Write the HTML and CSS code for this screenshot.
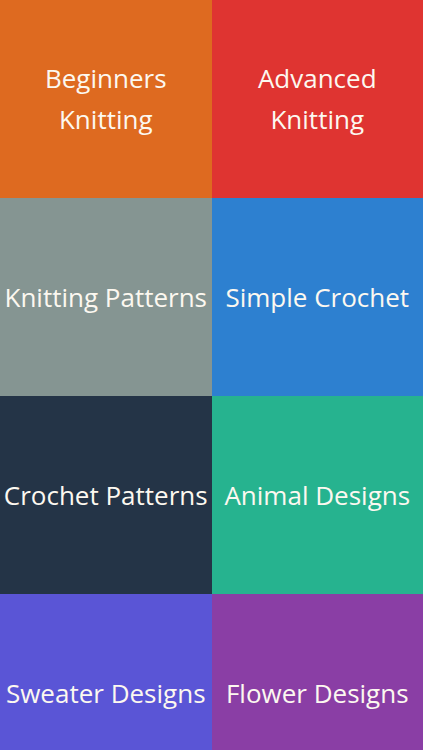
FILE: index.html
```html
<!DOCTYPE html>
<html>
<head>
<meta charset="utf-8">
<link rel="stylesheet" href="styles.css">
</head>
<body>
<div class="grid">
  <div class="tile c1"><span>Beginners<br>Knitting</span></div>
  <div class="tile c2"><span>Advanced<br>Knitting</span></div>
  <div class="tile c3"><span>Knitting Patterns</span></div>
  <div class="tile c4"><span>Simple Crochet</span></div>
  <div class="tile c5"><span>Crochet Patterns</span></div>
  <div class="tile c6"><span>Animal Designs</span></div>
  <div class="tile c7"><span>Sweater Designs</span></div>
  <div class="tile c8"><span>Flower Designs</span></div>
</div>
</body>
</html>
```
FILE: styles.css
```css
html, body {
  margin: 0;
  padding: 0;
  overflow: hidden;
  height: 750px;
}
.grid {
  display: grid;
  grid-template-columns: 211.5px 211.5px;
  grid-auto-rows: 198px;
}
.tile {
  display: flex;
  align-items: center;
  justify-content: center;
  text-align: center;
  color: #fcf8f0;
  font-family: "Open Sans", sans-serif;
  font-size: 26px;
  line-height: 41px;
  white-space: nowrap;
  letter-spacing: 0;
}
.c1 { background: #de6a20; }
.c2 { background: #df3431; }
.c3 { background: #859592; }
.c4 { background: #2d80d0; }
.c5 { background: #243447; }
.c6 { background: #26b38f; }
.c7 { background: #5a55d6; }
.c8 { background: #8a3ea5; }
```
